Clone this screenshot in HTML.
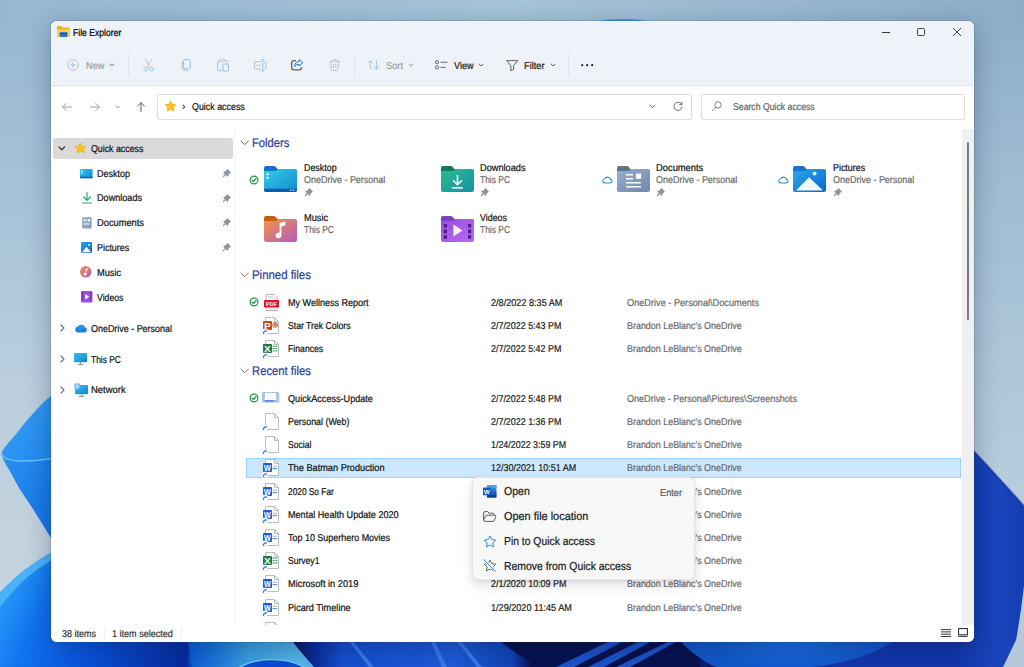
<!DOCTYPE html>
<html lang="en"><head><meta charset="utf-8"><title>File Explorer</title>
<style>
*{box-sizing:border-box;margin:0;padding:0}
html,body{width:1024px;height:667px;overflow:hidden;background:#a3bfd5}
body{position:relative;font-family:"Liberation Sans",sans-serif;text-rendering:geometricPrecision}
.t{position:absolute;white-space:nowrap;display:block;transform-origin:0 50%;-webkit-text-stroke:0.22px currentColor}
.abs{position:absolute}
#bg{position:absolute;left:0;top:0;width:1024px;height:667px}
#win{position:absolute;left:51px;top:21px;width:923px;height:621px;border-radius:6px;background:#fff;overflow:hidden;box-shadow:0 0 0 1px rgba(50,70,95,.16),0 7px 26px rgba(0,15,45,.30)}
#chrome{position:absolute;left:0;top:0;width:923px;height:65px;background:#eef3f9;border-bottom:1px solid #e1e6ec}
#side-sep{position:absolute;left:183px;top:106px;width:1px;height:498px;background:#f3f3f3}
#qa-hl{position:absolute;left:2px;top:117px;width:180px;height:21px;background:#d9d9d9;border-radius:2px}
.box{position:absolute;border:1px solid #dcdcdc;background:#fff;border-radius:2px}
#scroll{position:absolute;left:911px;top:107.5px;width:12.5px;height:496px;background:#f0f0f0}
#thumb{position:absolute;left:5.3px;top:13.2px;width:2px;height:178px;background:#7c7c7c;border-radius:1px}
#sel{position:absolute;left:195px;top:437px;width:715px;height:20px;background:#cce8ff;border:1px solid #99d1ff}
#menu{position:absolute;left:472px;top:477px;width:223px;height:103px;background:#f8f8f8;border-radius:6px;border:1px solid #e6e6e6;box-shadow:0 5px 12px rgba(0,0,0,.13),0 1px 3px rgba(0,0,0,.06)}
.vsep{position:absolute;width:1px;background:#dfe4ea}
svg{position:absolute;overflow:visible}
</style></head>
<body>

<svg id="bg" width="1024" height="667" viewBox="0 0 1024 667">
<defs>
<linearGradient id="sky" x1="0" y1="0" x2="1" y2="0">
<stop offset="0" stop-color="#95b7d1"/><stop offset="0.5" stop-color="#a5c3d9"/><stop offset="0.85" stop-color="#94b4cd"/><stop offset="1" stop-color="#8badc8"/>
</linearGradient>
<linearGradient id="lsky" x1="0" y1="0" x2="0" y2="1">
<stop offset="0" stop-color="#95b7d1"/><stop offset="0.3" stop-color="#a6c2d8"/><stop offset="0.6" stop-color="#bccfde"/><stop offset="1" stop-color="#c8d5e0"/>
</linearGradient>
<linearGradient id="rsky" x1="0" y1="0" x2="0" y2="1">
<stop offset="0" stop-color="#8badc8"/><stop offset="0.3" stop-color="#a0bdd4"/><stop offset="0.7" stop-color="#b6cbdc"/><stop offset="1" stop-color="#bccfdf"/>
</linearGradient>
<linearGradient id="p1a" x1="0" y1="0" x2="1" y2="1">
<stop offset="0" stop-color="#3aa2f6"/><stop offset="1" stop-color="#1f86ee"/>
</linearGradient>
<linearGradient id="p1b" x1="0" y1="0" x2="1" y2="1">
<stop offset="0" stop-color="#2a92f2"/><stop offset="1" stop-color="#0f6ce4"/>
</linearGradient>
<linearGradient id="p2" gradientUnits="userSpaceOnUse" x1="0" y1="590" x2="185" y2="667">
<stop offset="0" stop-color="#2b9cf8"/><stop offset="0.22" stop-color="#1074f0"/><stop offset="0.5" stop-color="#0a56e0"/><stop offset="1" stop-color="#072a9e"/>
</linearGradient>
<linearGradient id="bot" x1="0" y1="0" x2="1" y2="0">
<stop offset="0" stop-color="#1e84f2"/><stop offset="0.05" stop-color="#1468e6"/><stop offset="0.175" stop-color="#0838b4"/>
<stop offset="0.19" stop-color="#0838b4"/><stop offset="0.3" stop-color="#1650d0"/>
<stop offset="0.335" stop-color="#1752d2"/><stop offset="0.42" stop-color="#1c5cda"/><stop offset="0.48" stop-color="#1244b8"/>
<stop offset="0.5" stop-color="#06124e"/><stop offset="0.55" stop-color="#081a60"/><stop offset="0.6" stop-color="#1a50c8"/><stop offset="0.64" stop-color="#0a2478"/>
<stop offset="0.67" stop-color="#0a1f70"/><stop offset="0.7" stop-color="#0f4cc0"/><stop offset="0.78" stop-color="#1a68e0"/><stop offset="0.86" stop-color="#0e4cc0"/><stop offset="0.97" stop-color="#0c3cac"/><stop offset="1" stop-color="#0c3cac"/>
</linearGradient>
<linearGradient id="blob" x1="0" y1="0" x2="1" y2="0">
<stop offset="0" stop-color="#133aae"/><stop offset="0.6" stop-color="#1a45be"/><stop offset="1" stop-color="#153cb0"/>
</linearGradient>
<radialGradient id="glow"><stop offset="0" stop-color="#1f72e8" stop-opacity="0.9"/><stop offset="1" stop-color="#1f72e8" stop-opacity="0"/></radialGradient>
<linearGradient id="lp" gradientUnits="userSpaceOnUse" x1="188" y1="0" x2="300" y2="0"><stop offset="0" stop-color="#0f5cd6"/><stop offset="0.25" stop-color="#1c78dc"/><stop offset="0.55" stop-color="#3aa0e2"/><stop offset="1" stop-color="#56b6ea"/></linearGradient>
<linearGradient id="navy2" gradientUnits="userSpaceOnUse" x1="286" y1="0" x2="343" y2="0"><stop offset="0" stop-color="#050e44"/><stop offset="0.5" stop-color="#0a2e9c"/><stop offset="1" stop-color="#1650d0"/></linearGradient>
</defs>
<rect width="1024" height="667" fill="url(#sky)"/>
<rect x="0" y="0" width="60" height="667" fill="url(#lsky)"/>
<rect x="964" y="0" width="60" height="667" fill="url(#rsky)"/>
<rect x="0" y="0" width="1024" height="24" fill="url(#sky)"/>
<ellipse cx="622" cy="23" rx="27" ry="4" fill="#3a98ee"/>
<!-- left petal 1 -->
<path d="M60 389 C44 399 27 420.5 20 429 C12 439 4 447 1.4 453 C3 458 8 460 14 460.5 C28 462 42 460.5 60 457 Z" fill="url(#p1a)"/>
<path d="M1.4 453 C3 458 8 460 14 460.5 C28 462 42 460.5 60 457 L60 552 C52 540 42 523 33 509 C27 499 21 492 16.2 482.7 C10 470 3 462 1.4 453 Z" fill="url(#p1b)"/>
<path d="M1.4 453 C3 458 8 460 14 460.5 C28 462 42 460.5 60 457" fill="none" stroke="#66c0fc" stroke-width="1.3"/>
<!-- bottom strip -->
<rect x="40" y="630" width="984" height="37" fill="url(#bot)"/>
<rect x="283" y="630" width="60" height="37" fill="url(#navy2)"/>
<path d="M188 630 L284 630 C294 644 304 656 314 667 L192 667 C190 657 189 647 188 630 Z" fill="url(#lp)"/>
<ellipse cx="272" cy="681" rx="42" ry="21.5" fill="#0a4cd2" stroke="#6ac6f4" stroke-width="1.6"/>
<path d="M348 640 L352 640 L374 667 L369 667 Z M430 640 L434 640 L447 667 L442 667 Z M456 640 L460 640 L482 667 L477 667 Z" fill="#3f86ec" opacity="0.8"/>
<path d="M494 636 C510 650 526 660 542 667 L700 667 L700 636 Z" fill="#06124e"/>
<path d="M556 667 L612 640 L626 640 L574 667 Z M588 667 L642 640 L654 640 L604 667 Z M616 667 L668 642 L676 642 L630 667 Z" fill="#1c54cc"/>
<path d="M676 636 L700 636 L700 667 L716 667 C700 660 686 648 676 636 Z" fill="#0a1f70"/>
<path d="M700 636 L676 636 C686 648 700 660 716 667 L1024 667 L1024 636 Z" fill="#1259cc"/>
<ellipse cx="790" cy="640" rx="90" ry="30" fill="url(#glow)"/>
<path d="M812 667 C840 664 876 656 900 636 L1024 636 L1024 667 Z" fill="#1237ac"/>
<!-- left petal 2 -->
<path d="M60 548 C46 554 26 568 17 576 C10 582 4 588 0 592 L0 667 L60 667 Z" fill="#4ab2f8"/>
<path d="M60 556 C46 562 28 576 20 584 C12 592 5 600 0 607 L0 667 L188 667 L188 630 L60 630 Z" fill="url(#p2)"/>
<!-- right blob -->
<path d="M960 437 Q988 466 1026 509 L1026 575 C1023 600 1020 622 1016 640 L1003 667 L960 667 Z" fill="url(#blob)"/>
<path d="M960 437 Q988 466 1026 509" fill="none" stroke="#10309c" stroke-width="2.5" opacity="0.7"/>
<path d="M1026 568 L1026 667 L1003 667 L1016 640 C1020 620 1023 595 1026 568 Z" fill="#b4c8da"/>
<!-- left petal 1 convex top -->
</svg>

<div id="c">
<div id="win">
<div id="chrome"></div>
<div id="side-sep"></div>
<div id="qa-hl"></div>
<div id="scroll">
<div id="thumb"></div></div>
<div id="sel"></div>
<div class="abs" style="left:0;top:604px;width:923px;height:17px;background:#fff"></div></div>
<svg style="left:57.0px;top:26.0px" width="13" height="11" viewBox="0 0 13 11"><path d="M0 1.2 Q0 0 1.2 0 H4.4 L6 1.6 H11.8 Q13 1.6 13 2.8 V11 H0 Z" fill="#f5b21a"/><path d="M0 3.4 H13 V9.8 Q13 11 11.8 11 H1.2 Q0 11 0 9.8 Z" fill="#fdd252"/><rect x="2.6" y="6.6" width="7.8" height="4.4" rx="0.8" fill="#1a78d6"/><rect x="2.6" y="6.6" width="7.8" height="1.6" rx="0.6" fill="#0f5db0"/></svg>
<span class="t" id="t0" style="left:73.2px;top:27.0px;font-size:10.00px;line-height:13.00px;color:#000;transform:scaleX(0.8603);">File Explorer</span><svg style="left:882.0px;top:31.5px" width="8" height="1" viewBox="0 0 8 1"><rect width="8" height="1" fill="#3a3a3a"/></svg>
<svg style="left:917.0px;top:28.0px" width="8" height="8" viewBox="0 0 8 8"><rect x="0.5" y="0.5" width="7" height="7" rx="0.8" fill="none" stroke="#3a3a3a" stroke-width="0.95"/></svg>
<svg style="left:952.5px;top:28.0px" width="8" height="8" viewBox="0 0 8 8"><path d="M0.3 0.3 L7.7 7.7 M7.7 0.3 L0.3 7.7" stroke="#3a3a3a" stroke-width="0.95" stroke-linecap="round"/></svg>
<svg style="left:67.0px;top:59.0px" width="12" height="12" viewBox="0 0 12 12"><circle cx="6" cy="6" r="5.3" fill="none" stroke="#b9bdc2" stroke-width="0.9"/><path d="M6 3.2 V8.8 M3.2 6 H8.8" stroke="#8ec2ee" stroke-width="0.9"/></svg>
<span class="t" id="t1" style="left:86.3px;top:59.9px;font-size:10.00px;line-height:13.00px;color:#9b9fa4;transform:scaleX(0.9193);">New</span><svg style="left:109.0px;top:63.2px" width="6" height="4" viewBox="0 0 6 4"><path d="M1 1 L3 3 L5 1" fill="none" stroke="#8c9095" stroke-width="1" stroke-linecap="round" stroke-linejoin="round"/></svg>
<div class="vsep" style="left:128px;top:53px;height:24px"></div>
<svg style="left:143.0px;top:59.0px" width="11" height="12.5" viewBox="0 0 11 12.5"><path d="M2.2 0.3 L7.6 9 M8.8 0.3 L3.4 9" stroke="#b9bdc2" stroke-width="0.9" fill="none"/><circle cx="2.6" cy="10.2" r="1.8" fill="none" stroke="#8ec2ee" stroke-width="0.9"/><circle cx="8.4" cy="10.2" r="1.8" fill="none" stroke="#8ec2ee" stroke-width="0.9"/></svg>
<svg style="left:181.0px;top:59.0px" width="10" height="12" viewBox="0 0 10 12"><path d="M1.2 2.5 V9.4 Q1.2 11.2 3 11.2 H6.8" fill="none" stroke="#b9bdc2" stroke-width="1"/><rect x="2.6" y="0.5" width="6.6" height="9.3" rx="1.5" fill="none" stroke="#8ec2ee" stroke-width="1"/></svg>
<svg style="left:216.5px;top:58.8px" width="12" height="12.5" viewBox="0 0 12 12.5"><path d="M5 11.6 H2 Q0.6 11.6 0.6 10.2 V3 Q0.6 1.6 2 1.6 H9 Q10.4 1.6 10.4 3 V4" fill="none" stroke="#b9bdc2" stroke-width="1"/><rect x="3.2" y="0.4" width="4.6" height="2.2" rx="0.8" fill="#eef3f9" stroke="#b9bdc2" stroke-width="0.8"/><rect x="6" y="5" width="5.4" height="7" rx="1" fill="none" stroke="#8ec2ee" stroke-width="1"/></svg>
<svg style="left:253.5px;top:59.0px" width="12.5" height="12.5" viewBox="0 0 12.5 12.5"><path d="M7.4 2.6 H2 Q0.5 2.6 0.5 4.1 V8.6 Q0.5 10.1 2 10.1 H7.4 M10.2 2.6 H10.6 Q12 2.6 12 4.1 V8.6 Q12 10.1 10.6 10.1 H10.2" fill="none" stroke="#b9bdc2" stroke-width="1"/><path d="M8.8 0.8 V11.9 M7.4 0.6 H10.2 M7.4 12 H10.2 M2.6 6.3 H6.6" stroke="#8ec2ee" stroke-width="0.9" fill="none"/></svg>
<svg style="left:291.0px;top:59.2px" width="12.5" height="11.6" viewBox="0 0 12.5 11.6"><path d="M5 1.6 H3 Q0.7 1.6 0.7 3.9 V8.6 Q0.7 10.9 3 10.9 H8.2 Q10.5 10.9 10.5 8.6 V8.2" fill="none" stroke="#5d5d5d" stroke-width="1.3"/><path d="M8 0.6 L11.8 3.8 L8 7 V5.2 Q5.2 5 3.8 7.6 Q3.8 3 8 2.4 Z" fill="none" stroke="#1975d2" stroke-width="1" stroke-linejoin="round"/></svg>
<svg style="left:328.5px;top:59.0px" width="11.5" height="12" viewBox="0 0 11.5 12"><path d="M0.4 2.4 H11.1 M4 2.2 Q4 0.5 5.75 0.5 Q7.5 0.5 7.5 2.2 M1.6 2.6 L2.4 10.4 Q2.5 11.5 3.6 11.5 H7.9 Q9 11.5 9.1 10.4 L9.9 2.6 M4.6 4.8 V9 M6.9 4.8 V9" fill="none" stroke="#b9bdc2" stroke-width="0.9"/></svg>
<div class="vsep" style="left:354px;top:53px;height:24px"></div>
<svg style="left:367.0px;top:60.0px" width="13" height="10" viewBox="0 0 13 10"><path d="M3.4 9.6 V0.8 M0.6 3.6 L3.4 0.7 L6.2 3.6" fill="none" stroke="#b9bdc2" stroke-width="0.9"/><path d="M9.4 0.4 V9.2 M6.6 6.4 L9.4 9.3 L12.2 6.4" fill="none" stroke="#8ec2ee" stroke-width="0.9"/></svg>
<span class="t" id="t2" style="left:386.0px;top:59.9px;font-size:10.00px;line-height:13.00px;color:#9b9fa4;transform:scaleX(0.9267);">Sort</span><svg style="left:407.6px;top:63.2px" width="6" height="4" viewBox="0 0 6 4"><path d="M1 1 L3 3 L5 1" fill="none" stroke="#8c9095" stroke-width="1" stroke-linecap="round" stroke-linejoin="round"/></svg>
<svg style="left:435.0px;top:60.2px" width="13" height="9.6" viewBox="0 0 13 9.6"><circle cx="2" cy="2.2" r="1.6" fill="none" stroke="#5a5a5a" stroke-width="0.9"/><circle cx="2" cy="7.4" r="1.6" fill="none" stroke="#5a5a5a" stroke-width="0.9"/><path d="M5.6 2.2 H12.6 M5.6 7.4 H10.4" stroke="#5a5a5a" stroke-width="0.9"/></svg>
<span class="t" id="t3" style="left:454.0px;top:59.9px;font-size:10.00px;line-height:13.00px;color:#1a1a1a;transform:scaleX(0.9116);">View</span><svg style="left:478.4px;top:63.2px" width="6" height="4" viewBox="0 0 6 4"><path d="M1 1 L3 3 L5 1" fill="none" stroke="#6a6a6a" stroke-width="1" stroke-linecap="round" stroke-linejoin="round"/></svg>
<svg style="left:505.8px;top:59.6px" width="12.4" height="11.4" viewBox="0 0 12.4 11.4"><path d="M0.6 0.6 H11.8 L7.6 5.6 V9.4 L4.8 10.8 V5.6 Z" fill="none" stroke="#5a5a5a" stroke-width="0.95" stroke-linejoin="round"/></svg>
<span class="t" id="t4" style="left:524.4px;top:59.9px;font-size:10.00px;line-height:13.00px;color:#1a1a1a;transform:scaleX(0.9220);">Filter</span><svg style="left:549.7px;top:63.2px" width="6" height="4" viewBox="0 0 6 4"><path d="M1 1 L3 3 L5 1" fill="none" stroke="#6a6a6a" stroke-width="1" stroke-linecap="round" stroke-linejoin="round"/></svg>
<div class="vsep" style="left:568px;top:53px;height:24px"></div>
<svg style="left:581.0px;top:64.2px" width="12.4" height="2.4" viewBox="0 0 12.4 2.4"><circle cx="1.2" cy="1.2" r="1.1" fill="#222"/><circle cx="6.2" cy="1.2" r="1.1" fill="#222"/><circle cx="11.2" cy="1.2" r="1.1" fill="#222"/></svg>
<svg style="left:62.0px;top:102.8px" width="10" height="8" viewBox="0 0 10 8"><path d="M9.6 4 H0.8 M4.2 0.5 L0.7 4 L4.2 7.5" fill="none" stroke="#9a9a9a" stroke-width="0.95" stroke-linecap="round" stroke-linejoin="round"/></svg>
<svg style="left:89.5px;top:102.8px" width="10" height="8" viewBox="0 0 10 8"><path d="M0.4 4 H9.2 M5.8 0.5 L9.3 4 L5.8 7.5" fill="none" stroke="#9a9a9a" stroke-width="0.95" stroke-linecap="round" stroke-linejoin="round"/></svg>
<svg style="left:115.2px;top:104.7px" width="5.6" height="3.8" viewBox="0 0 5.6 3.8"><path d="M1 1 L2.8 2.8 L4.6 1" fill="none" stroke="#9a9a9a" stroke-width="1" stroke-linecap="round" stroke-linejoin="round"/></svg>
<svg style="left:136.5px;top:101.6px" width="8" height="10" viewBox="0 0 8 10"><path d="M4 9.6 V0.8 M0.5 4.2 L4 0.7 L7.5 4.2" fill="none" stroke="#555" stroke-width="0.95" stroke-linecap="round" stroke-linejoin="round"/></svg>
<div class="box" style="left:157px;top:93.5px;width:535px;height:26px"></div>
<svg style="left:163.7px;top:100.2px" width="13" height="13" viewBox="0 0 13 13"><polygon points="6.50,1.00 8.12,4.28 11.73,4.80 9.12,7.35 9.73,10.95 6.50,9.25 3.27,10.95 3.88,7.35 1.27,4.80 4.88,4.28" fill="#fcc51c" stroke="#f7ae0c" stroke-width="0.9" stroke-linejoin="round"/></svg>
<svg style="left:181.6px;top:104.4px" width="3.8" height="5.6" viewBox="0 0 3.8 5.6"><path d="M1 1 L2.8 2.8 L1 4.6" fill="none" stroke="#555" stroke-width="1.1" stroke-linecap="round" stroke-linejoin="round"/></svg>
<span class="t" id="t5" style="left:192.4px;top:100.9px;font-size:10.00px;line-height:13.00px;color:#111;transform:scaleX(0.8879);">Quick access</span><svg style="left:648.8px;top:104.0px" width="7" height="4.5" viewBox="0 0 7 4.5"><path d="M1 1 L3.5 3.5 L6 1" fill="none" stroke="#666" stroke-width="0.95" stroke-linecap="round" stroke-linejoin="round"/></svg>
<svg style="left:672.5px;top:101.0px" width="10" height="10" viewBox="0 0 10 10"><path d="M8.7 3.6 A4.1 4.1 0 1 0 9.1 5.6" fill="none" stroke="#666" stroke-width="0.95"/><path d="M8.9 0.9 V3.7 H6.1" fill="none" stroke="#666" stroke-width="0.95"/></svg>
<div class="box" style="left:700.5px;top:93.5px;width:264.5px;height:26px"></div>
<svg style="left:712.0px;top:101.2px" width="10" height="10" viewBox="0 0 10 10"><circle cx="6" cy="3.9" r="3.2" fill="none" stroke="#777" stroke-width="0.9"/><path d="M3.8 6.3 L0.5 9.6" stroke="#777" stroke-width="0.9" stroke-linecap="round"/></svg>
<span class="t" id="t6" style="left:732.6px;top:100.9px;font-size:10.00px;line-height:13.00px;color:#666;transform:scaleX(0.8697);">Search Quick access</span><svg style="left:58.2px;top:145.9px" width="7.6" height="4.8" viewBox="0 0 7.6 4.8"><path d="M1 1 L3.8 3.8 L6.6 1" fill="none" stroke="#333" stroke-width="1.2" stroke-linecap="round" stroke-linejoin="round"/></svg>
<svg style="left:73.9px;top:142.2px" width="13" height="13" viewBox="0 0 13 13"><polygon points="6.50,1.00 8.12,4.28 11.73,4.80 9.12,7.35 9.73,10.95 6.50,9.25 3.27,10.95 3.88,7.35 1.27,4.80 4.88,4.28" fill="#fcc51c" stroke="#f7ae0c" stroke-width="0.9" stroke-linejoin="round"/></svg>
<span class="t" id="t7" style="left:90.6px;top:142.9px;font-size:10.00px;line-height:13.00px;color:#111;transform:scaleX(0.8811);">Quick access</span><span class="t" id="t8" style="left:96.8px;top:168.1px;font-size:10.00px;line-height:13.00px;color:#111;transform:scaleX(0.8968);">Desktop</span><span class="t" id="t9" style="left:96.8px;top:192.2px;font-size:10.00px;line-height:13.00px;color:#111;transform:scaleX(0.9094);">Downloads</span><span class="t" id="t10" style="left:96.8px;top:217.3px;font-size:10.00px;line-height:13.00px;color:#111;transform:scaleX(0.9293);">Documents</span><span class="t" id="t11" style="left:96.8px;top:242.1px;font-size:10.00px;line-height:13.00px;color:#111;transform:scaleX(0.8913);">Pictures</span><span class="t" id="t12" style="left:96.8px;top:266.9px;font-size:10.00px;line-height:13.00px;color:#111;transform:scaleX(0.9263);">Music</span><span class="t" id="t13" style="left:96.8px;top:291.7px;font-size:10.00px;line-height:13.00px;color:#111;transform:scaleX(0.8682);">Videos</span><svg style="left:221.9px;top:169.1px" width="8.5" height="8.5" viewBox="0 0 8.5 8.5"><g transform="translate(4.1,4.9) rotate(45)"><path d="M-2.3 -4.2 H2.3 L2 -1.0 L2.8 0 V1 H-2.8 V0 L-2 -1.0 Z" fill="#8a959f" stroke="#8a959f" stroke-width="0.5" stroke-linejoin="round"/><path d="M0 1 V3.9" stroke="#8a959f" stroke-width="1.3" stroke-linecap="round"/></g></svg>
<svg style="left:221.9px;top:193.7px" width="8.5" height="8.5" viewBox="0 0 8.5 8.5"><g transform="translate(4.1,4.9) rotate(45)"><path d="M-2.3 -4.2 H2.3 L2 -1.0 L2.8 0 V1 H-2.8 V0 L-2 -1.0 Z" fill="#8a959f" stroke="#8a959f" stroke-width="0.5" stroke-linejoin="round"/><path d="M0 1 V3.9" stroke="#8a959f" stroke-width="1.3" stroke-linecap="round"/></g></svg>
<svg style="left:221.9px;top:218.3px" width="8.5" height="8.5" viewBox="0 0 8.5 8.5"><g transform="translate(4.1,4.9) rotate(45)"><path d="M-2.3 -4.2 H2.3 L2 -1.0 L2.8 0 V1 H-2.8 V0 L-2 -1.0 Z" fill="#8a959f" stroke="#8a959f" stroke-width="0.5" stroke-linejoin="round"/><path d="M0 1 V3.9" stroke="#8a959f" stroke-width="1.3" stroke-linecap="round"/></g></svg>
<svg style="left:221.9px;top:243.1px" width="8.5" height="8.5" viewBox="0 0 8.5 8.5"><g transform="translate(4.1,4.9) rotate(45)"><path d="M-2.3 -4.2 H2.3 L2 -1.0 L2.8 0 V1 H-2.8 V0 L-2 -1.0 Z" fill="#8a959f" stroke="#8a959f" stroke-width="0.5" stroke-linejoin="round"/><path d="M0 1 V3.9" stroke="#8a959f" stroke-width="1.3" stroke-linecap="round"/></g></svg>
<svg style="left:80.2px;top:168.6px" width="12.6" height="9.2" viewBox="0 0 12.6 9.2"><defs><linearGradient id="sd" x1="0" y1="0" x2="1" y2="1"><stop offset="0" stop-color="#34c6ea"/><stop offset="1" stop-color="#1486d0"/></linearGradient></defs><rect width="12.6" height="9.2" rx="1" fill="url(#sd)"/><rect y="7.8" width="12.6" height="1.4" fill="#0c5cb4"/><rect x="1.2" y="1.6" width="1.3" height="1.3" fill="#fff"/><rect x="1.2" y="3.8" width="1.3" height="1.3" fill="#fff"/></svg>
<svg style="left:81.5px;top:192.0px" width="10" height="12" viewBox="0 0 10 12"><path d="M5 0.5 V8.2 M1.6 5 L5 8.4 L8.4 5" fill="none" stroke="#22a878" stroke-width="1.2" stroke-linecap="round" stroke-linejoin="round"/><path d="M0.6 11 H9.4" stroke="#22a878" stroke-width="1.2" stroke-linecap="round"/></svg>
<svg style="left:81.6px;top:217.0px" width="9.6" height="11.6" viewBox="0 0 9.6 11.6"><defs><linearGradient id="sdoc" x1="0" y1="0" x2="1" y2="1"><stop offset="0" stop-color="#a9bcd8"/><stop offset="1" stop-color="#7f96b8"/></linearGradient></defs><rect width="9.6" height="11.6" rx="1" fill="url(#sdoc)"/><path d="M1.8 3.4 H4.6 M1.8 7 H7.8" stroke="#fff" stroke-width="1.1"/><rect x="5.8" y="2.2" width="2.2" height="2.2" fill="#fff"/></svg>
<svg style="left:80.8px;top:242.0px" width="11" height="11" viewBox="0 0 11 11"><defs><linearGradient id="spic" x1="0" y1="0" x2="1" y2="1"><stop offset="0" stop-color="#2ba0ea"/><stop offset="1" stop-color="#0c66c8"/></linearGradient></defs><rect width="11" height="11" rx="1.2" fill="url(#spic)"/><path d="M1 10.2 L5.6 4.8 L10 10.2 Z" fill="#fff"/><circle cx="8.2" cy="2.8" r="1.1" fill="#fff"/></svg>
<svg style="left:80.4px;top:266.4px" width="11.6" height="11.6" viewBox="0 0 11.6 11.6"><defs><linearGradient id="smus" x1="0" y1="0" x2="1" y2="1"><stop offset="0" stop-color="#f09050"/><stop offset="1" stop-color="#b860b4"/></linearGradient></defs><circle cx="5.8" cy="5.8" r="5.8" fill="url(#smus)"/><path d="M5.6 8 V3 L8 2.4 V4 L6.4 4.4 V8 A1.3 1.3 0 1 1 5.6 7 Z" fill="#fff"/></svg>
<svg style="left:80.6px;top:291.4px" width="11.4" height="11.4" viewBox="0 0 11.4 11.4"><rect width="11.4" height="11.4" rx="1.2" fill="#9a4ee0"/><path d="M4.2 3 L8.2 5.7 L4.2 8.4 Z" fill="#fff"/><path d="M1.4 1.4 V10 M10 1.4 V10" stroke="#4a2090" stroke-width="1.2" stroke-dasharray="1.6 1.2"/></svg>
<svg style="left:59.9px;top:324.0px" width="5" height="8" viewBox="0 0 5 8"><path d="M1 1 L4 4 L1 7" fill="none" stroke="#6a6a6a" stroke-width="1.1" stroke-linecap="round" stroke-linejoin="round"/></svg>
<span class="t" id="t14" style="left:90.5px;top:322.7px;font-size:10.00px;line-height:13.00px;color:#111;transform:scaleX(0.8930);">OneDrive - Personal</span><svg style="left:59.9px;top:354.8px" width="5" height="8" viewBox="0 0 5 8"><path d="M1 1 L4 4 L1 7" fill="none" stroke="#6a6a6a" stroke-width="1.1" stroke-linecap="round" stroke-linejoin="round"/></svg>
<span class="t" id="t15" style="left:90.5px;top:353.5px;font-size:10.00px;line-height:13.00px;color:#111;transform:scaleX(0.8408);">This PC</span><svg style="left:59.9px;top:385.7px" width="5" height="8" viewBox="0 0 5 8"><path d="M1 1 L4 4 L1 7" fill="none" stroke="#6a6a6a" stroke-width="1.1" stroke-linecap="round" stroke-linejoin="round"/></svg>
<span class="t" id="t16" style="left:90.5px;top:384.4px;font-size:10.00px;line-height:13.00px;color:#111;transform:scaleX(0.9458);">Network</span><svg style="left:73.8px;top:323.6px" width="13.2" height="8.4" viewBox="0 0 13.2 8.4"><path d="M3.2 8.4 H10.6 A2.6 2.6 0 0 0 11 3.3 A3.9 3.9 0 0 0 4 2.6 A3 3 0 0 0 3.2 8.4 Z" fill="#1a7ee0"/><path d="M4 2.6 A3.9 3.9 0 0 1 11 3.3 L5 7 Z" fill="#2f9bf2" opacity="0.7"/></svg>
<svg style="left:74.0px;top:353.0px" width="13" height="12" viewBox="0 0 13 12"><defs><linearGradient id="mon353" x1="0" y1="0" x2="1" y2="1"><stop offset="0" stop-color="#34c4e6"/><stop offset="1" stop-color="#1482cc"/></linearGradient></defs><rect x="0" y="0" width="13" height="9.2" rx="1" fill="url(#mon353)"/><path d="M6.5 9.2 V11 M3.6 11.4 H9.4" stroke="#8a9098" stroke-width="1"/></svg>
<svg style="left:75.2px;top:385.2px" width="13" height="12" viewBox="0 0 13 12"><defs><linearGradient id="mon385" x1="0" y1="0" x2="1" y2="1"><stop offset="0" stop-color="#34c4e6"/><stop offset="1" stop-color="#1482cc"/></linearGradient></defs><rect x="0" y="0" width="13" height="9.2" rx="1" fill="url(#mon385)"/><path d="M6.5 9.2 V11 M3.6 11.4 H9.4" stroke="#8a9098" stroke-width="1"/></svg>
<svg style="left:73.8px;top:383.4px" width="6.4" height="6.4" viewBox="0 0 6.4 6.4"><circle cx="3.2" cy="3.2" r="3.1" fill="#5ab4ee"/><path d="M0.4 3.2 H6 M3.2 0.3 Q1.4 3.2 3.2 6.1 M3.2 0.3 Q5 3.2 3.2 6.1" stroke="#e8f4ff" stroke-width="0.6" fill="none"/></svg>
<svg style="left:240.2px;top:140.1px" width="9.4" height="5.7" viewBox="0 0 9.4 5.7"><path d="M1 1 L4.7 4.7 L8.4 1" fill="none" stroke="#707070" stroke-width="1" stroke-linecap="round" stroke-linejoin="round"/></svg>
<span class="t" id="t17" style="left:251.9px;top:134.8px;font-size:12.50px;line-height:16.25px;color:#2a4198;transform:scaleX(0.8972);">Folders</span><svg style="left:240.2px;top:272.2px" width="9.4" height="5.7" viewBox="0 0 9.4 5.7"><path d="M1 1 L4.7 4.7 L8.4 1" fill="none" stroke="#707070" stroke-width="1" stroke-linecap="round" stroke-linejoin="round"/></svg>
<span class="t" id="t18" style="left:251.9px;top:267.0px;font-size:12.50px;line-height:16.25px;color:#2a4198;transform:scaleX(0.9114);">Pinned files</span><svg style="left:240.2px;top:368.2px" width="9.4" height="5.7" viewBox="0 0 9.4 5.7"><path d="M1 1 L4.7 4.7 L8.4 1" fill="none" stroke="#707070" stroke-width="1" stroke-linecap="round" stroke-linejoin="round"/></svg>
<span class="t" id="t19" style="left:251.9px;top:363.0px;font-size:12.50px;line-height:16.25px;color:#2a4198;transform:scaleX(0.9018);">Recent files</span><svg style="left:264.2px;top:166.1px" width="33" height="26" viewBox="0 0 33 26"><defs><linearGradient id="fg1" x1="0" y1="0" x2="1" y2="1"><stop offset="0" stop-color="#35cde6"/><stop offset="1" stop-color="#1488d2"/></linearGradient></defs><path d="M0 2 Q0 0 2 0 H9.5 Q11 0 12 1.2 L13.6 3.2 H31 Q33 3.2 33 5.2 V10 H0 Z" fill="#136fd0"/><path d="M0 5 H11 Q12.2 5 13 4.2 L14 3.2 H31 Q33 3.2 33 5.2 V24 Q33 26 31 26 H2 Q0 26 0 24 Z" fill="url(#fg1)"/><path d="M0 22.8 H33 V24 Q33 26 31 26 H2 Q0 26 0 24 Z" fill="#0a5cb6"/><rect x="2.6" y="7.2" width="2" height="2" fill="#fff"/><rect x="2.6" y="10.8" width="2" height="2" fill="#fff"/><rect x="26" y="23.6" width="1.6" height="1.2" fill="#bfe0ff"/><rect x="28.8" y="23.6" width="1.6" height="1.2" fill="#bfe0ff"/></svg>
<svg style="left:440.7px;top:166.1px" width="33" height="26" viewBox="0 0 33 26"><defs><linearGradient id="fg2" x1="0" y1="0" x2="1" y2="1"><stop offset="0" stop-color="#2cba8a"/><stop offset="1" stop-color="#1692a4"/></linearGradient></defs><path d="M0 2 Q0 0 2 0 H9.5 Q11 0 12 1.2 L13.6 3.2 H31 Q33 3.2 33 5.2 V10 H0 Z" fill="#0e7d5a"/><path d="M0 5 H11 Q12.2 5 13 4.2 L14 3.2 H31 Q33 3.2 33 5.2 V24 Q33 26 31 26 H2 Q0 26 0 24 Z" fill="url(#fg2)"/><path d="M16.5 9 V18.4 M12 14.2 L16.5 18.7 L21 14.2" fill="none" stroke="#fff" stroke-width="1.6"/><path d="M11 21.8 H22" stroke="#fff" stroke-width="1.6"/></svg>
<svg style="left:617.0px;top:166.1px" width="33" height="26" viewBox="0 0 33 26"><defs><linearGradient id="fg3" x1="0" y1="0" x2="1" y2="1"><stop offset="0" stop-color="#97aed0"/><stop offset="1" stop-color="#6f88aa"/></linearGradient></defs><path d="M0 2 Q0 0 2 0 H9.5 Q11 0 12 1.2 L13.6 3.2 H31 Q33 3.2 33 5.2 V10 H0 Z" fill="#5f7686"/><path d="M0 5 H11 Q12.2 5 13 4.2 L14 3.2 H31 Q33 3.2 33 5.2 V24 Q33 26 31 26 H2 Q0 26 0 24 Z" fill="url(#fg3)"/><path d="M9 12 H16 M9 16 H16 M9 20 H24 M9 24 H24" stroke="#fff" stroke-width="1.5" transform="translate(0,-3.2)"/><rect x="19" y="7.6" width="5.2" height="5.2" fill="#fff"/></svg>
<svg style="left:793.4px;top:166.1px" width="33" height="26" viewBox="0 0 33 26"><defs><linearGradient id="fg4" x1="0" y1="0" x2="1" y2="1"><stop offset="0" stop-color="#2fa8ec"/><stop offset="1" stop-color="#0966c8"/></linearGradient></defs><path d="M0 2 Q0 0 2 0 H9.5 Q11 0 12 1.2 L13.6 3.2 H31 Q33 3.2 33 5.2 V10 H0 Z" fill="#1374d8"/><path d="M0 5 H11 Q12.2 5 13 4.2 L14 3.2 H31 Q33 3.2 33 5.2 V24 Q33 26 31 26 H2 Q0 26 0 24 Z" fill="url(#fg4)"/><path d="M3 24.6 L16 11.2 L30 24.6 Z" fill="#f0f7ff"/><circle cx="21.6" cy="7.6" r="1.9" fill="#fff"/></svg>
<svg style="left:264.2px;top:215.6px" width="33" height="26" viewBox="0 0 33 26"><defs><linearGradient id="fg5" x1="0" y1="0" x2="1" y2="1"><stop offset="0" stop-color="#f5924a"/><stop offset="1" stop-color="#b45cb8"/></linearGradient></defs><path d="M0 2 Q0 0 2 0 H9.5 Q11 0 12 1.2 L13.6 3.2 H31 Q33 3.2 33 5.2 V10 H0 Z" fill="#c4600e"/><path d="M0 5 H11 Q12.2 5 13 4.2 L14 3.2 H31 Q33 3.2 33 5.2 V24 Q33 26 31 26 H2 Q0 26 0 24 Z" fill="url(#fg5)"/><path d="M15.6 18.6 V7 L21.4 5.4 V9.2 L17.4 10.4 V19.4 A2.9 2.9 0 1 1 15.6 16.8 Z" fill="#fff"/></svg>
<svg style="left:440.7px;top:215.6px" width="33" height="26" viewBox="0 0 33 26"><defs><linearGradient id="fg6" x1="0" y1="0" x2="1" y2="1"><stop offset="0" stop-color="#9a4ce0"/><stop offset="1" stop-color="#b86af0"/></linearGradient></defs><path d="M0 2 Q0 0 2 0 H9.5 Q11 0 12 1.2 L13.6 3.2 H31 Q33 3.2 33 5.2 V10 H0 Z" fill="#7a40c0"/><path d="M0 5 H11 Q12.2 5 13 4.2 L14 3.2 H31 Q33 3.2 33 5.2 V24 Q33 26 31 26 H2 Q0 26 0 24 Z" fill="url(#fg6)"/><path d="M12.4 8.6 L21.6 14.6 L12.4 20.6 Z" fill="#f4ecff"/><path d="M4.4 8 V23 M28.6 8 V23" stroke="#4a2388" stroke-width="3.2" stroke-dasharray="3.6 2"/></svg>
<span class="t" id="t20" style="left:303.5px;top:162.3px;font-size:10.00px;line-height:13.00px;color:#111;transform:scaleX(0.8886);">Desktop</span><span class="t" id="t21" style="left:303.5px;top:174.4px;font-size:10.00px;line-height:13.00px;color:#6b6b6b;transform:scaleX(0.8974);">OneDrive - Personal</span><svg style="left:303.7px;top:188.0px" width="8.5" height="8.5" viewBox="0 0 8.5 8.5"><g transform="translate(4.1,4.9) rotate(45)"><path d="M-2.3 -4.2 H2.3 L2 -1.0 L2.8 0 V1 H-2.8 V0 L-2 -1.0 Z" fill="#8a959f" stroke="#8a959f" stroke-width="0.5" stroke-linejoin="round"/><path d="M0 1 V3.9" stroke="#8a959f" stroke-width="1.3" stroke-linecap="round"/></g></svg>
<span class="t" id="t22" style="left:479.6px;top:162.3px;font-size:10.00px;line-height:13.00px;color:#111;transform:scaleX(0.9215);">Downloads</span><span class="t" id="t23" style="left:479.6px;top:174.4px;font-size:10.00px;line-height:13.00px;color:#6b6b6b;transform:scaleX(0.8436);">This PC</span><svg style="left:479.8px;top:188.0px" width="8.5" height="8.5" viewBox="0 0 8.5 8.5"><g transform="translate(4.1,4.9) rotate(45)"><path d="M-2.3 -4.2 H2.3 L2 -1.0 L2.8 0 V1 H-2.8 V0 L-2 -1.0 Z" fill="#8a959f" stroke="#8a959f" stroke-width="0.5" stroke-linejoin="round"/><path d="M0 1 V3.9" stroke="#8a959f" stroke-width="1.3" stroke-linecap="round"/></g></svg>
<span class="t" id="t24" style="left:656.0px;top:162.3px;font-size:10.00px;line-height:13.00px;color:#111;transform:scaleX(0.9352);">Documents</span><span class="t" id="t25" style="left:656.0px;top:174.4px;font-size:10.00px;line-height:13.00px;color:#6b6b6b;transform:scaleX(0.8974);">OneDrive - Personal</span><svg style="left:656.2px;top:188.0px" width="8.5" height="8.5" viewBox="0 0 8.5 8.5"><g transform="translate(4.1,4.9) rotate(45)"><path d="M-2.3 -4.2 H2.3 L2 -1.0 L2.8 0 V1 H-2.8 V0 L-2 -1.0 Z" fill="#8a959f" stroke="#8a959f" stroke-width="0.5" stroke-linejoin="round"/><path d="M0 1 V3.9" stroke="#8a959f" stroke-width="1.3" stroke-linecap="round"/></g></svg>
<span class="t" id="t26" style="left:832.6px;top:162.3px;font-size:10.00px;line-height:13.00px;color:#111;transform:scaleX(0.8886);">Pictures</span><span class="t" id="t27" style="left:832.6px;top:174.4px;font-size:10.00px;line-height:13.00px;color:#6b6b6b;transform:scaleX(0.8974);">OneDrive - Personal</span><svg style="left:832.8px;top:188.0px" width="8.5" height="8.5" viewBox="0 0 8.5 8.5"><g transform="translate(4.1,4.9) rotate(45)"><path d="M-2.3 -4.2 H2.3 L2 -1.0 L2.8 0 V1 H-2.8 V0 L-2 -1.0 Z" fill="#8a959f" stroke="#8a959f" stroke-width="0.5" stroke-linejoin="round"/><path d="M0 1 V3.9" stroke="#8a959f" stroke-width="1.3" stroke-linecap="round"/></g></svg>
<span class="t" id="t28" style="left:303.5px;top:211.7px;font-size:10.00px;line-height:13.00px;color:#111;transform:scaleX(0.9225);">Music</span><span class="t" id="t29" style="left:303.5px;top:223.8px;font-size:10.00px;line-height:13.00px;color:#6b6b6b;transform:scaleX(0.8408);">This PC</span><span class="t" id="t30" style="left:479.6px;top:211.7px;font-size:10.00px;line-height:13.00px;color:#111;transform:scaleX(0.8880);">Videos</span><span class="t" id="t31" style="left:479.6px;top:223.8px;font-size:10.00px;line-height:13.00px;color:#6b6b6b;transform:scaleX(0.8436);">This PC</span><svg style="left:249.0px;top:175.0px" width="10" height="10" viewBox="0 0 10 10"><circle cx="5" cy="5" r="3.9" fill="#fff" stroke="#2c9a4c" stroke-width="1.25"/><path d="M3.1 5.1 L4.5 6.5 L7 3.7" fill="none" stroke="#2c9a4c" stroke-width="1.3" stroke-linecap="round" stroke-linejoin="round"/></svg>
<svg style="left:601.8px;top:175.9px" width="10.4" height="7.8" viewBox="0 0 12 9"><path d="M3.2 8 H9.2 A2.2 2.2 0 0 0 9.4 3.6 A3.2 3.2 0 0 0 3.4 3.2 A2.4 2.4 0 0 0 3.2 8 Z" fill="#fff" stroke="#1e8fe8" stroke-width="1.25" stroke-linejoin="round"/></svg>
<svg style="left:778.4px;top:175.9px" width="10.4" height="7.8" viewBox="0 0 12 9"><path d="M3.2 8 H9.2 A2.2 2.2 0 0 0 9.4 3.6 A3.2 3.2 0 0 0 3.4 3.2 A2.4 2.4 0 0 0 3.2 8 Z" fill="#fff" stroke="#1e8fe8" stroke-width="1.25" stroke-linejoin="round"/></svg>
<svg style="left:263.6px;top:293.7px" width="15" height="17" viewBox="0 0 15 17"><path d="M2 0.5 H10 L13 3.5 V16.5 H2 Z" fill="#fff" stroke="#b5b5b5" stroke-width="1"/><path d="M3.5 2.5 H9 M3.5 4 H11.5 M3.5 14.8 H11.5" stroke="#d0d0d0" stroke-width="0.8"/><rect x="0" y="6" width="15" height="7.6" rx="0.8" fill="#e0142c"/><text x="7.5" y="12" font-family="Liberation Sans, sans-serif" font-size="5.6" font-weight="bold" fill="#fff" text-anchor="middle">PDF</text></svg>
<svg style="left:249.2px;top:297.2px" width="10" height="10" viewBox="0 0 10 10"><circle cx="5" cy="5" r="3.9" fill="#fff" stroke="#2c9a4c" stroke-width="1.25"/><path d="M3.1 5.1 L4.5 6.5 L7 3.7" fill="none" stroke="#2c9a4c" stroke-width="1.3" stroke-linecap="round" stroke-linejoin="round"/></svg>
<span class="t" id="t32" style="left:287.8px;top:296.9px;font-size:10.00px;line-height:13.00px;color:#111;transform:scaleX(0.9026);">My Wellness Report</span><span class="t" id="t33" style="left:491.0px;top:296.9px;font-size:10.00px;line-height:13.00px;color:#222;transform:scaleX(0.9106);">2/8/2022 8:35 AM</span><span class="t" id="t34" style="left:626.8px;top:296.9px;font-size:10.00px;line-height:13.00px;color:#6b6b6b;transform:scaleX(0.9170);">OneDrive - Personal\Documents</span><svg style="left:264.8px;top:316.8px" width="14" height="17" viewBox="0 0 14 17"><path d="M0.5 0.5 H9.5 L13.5 4.5 V16.5 H0.5 Z" fill="#fff" stroke="#b4b4b4" stroke-width="0.9"/><path d="M9.5 0.5 V4.5 H13.5" fill="none" stroke="#b4b4b4" stroke-width="0.9"/><circle cx="10" cy="8" r="3" fill="#e8a080"/><path d="M10 5 V8 H13" stroke="#c84a1c" stroke-width="0.8" fill="none"/><rect x="-2" y="4" width="9" height="9" rx="0.8" fill="#c84a1c"/><text x="2.5" y="11.6" font-family="Liberation Sans, sans-serif" font-size="8.6" font-weight="bold" fill="#fff" text-anchor="middle" textLength="6.8" lengthAdjust="spacingAndGlyphs">P</text></svg>
<svg style="left:262.3px;top:329.4px" width="5.6" height="5.2" viewBox="0 0 5.6 5.2"><rect width="5.6" height="5.2" fill="#fff"/><path d="M0 0 H5.6 V5.2 H0 Z" fill="none" stroke="#d8dde4" stroke-width="0.5"/><path d="M1.4 4.4 Q1.5 2.2 3.6 2.1" fill="none" stroke="#2a86e8" stroke-width="1.2" stroke-linecap="round"/><path d="M2.6 0.9 H4.6 V2.9 Z" fill="#2a86e8"/></svg>
<span class="t" id="t35" style="left:287.8px;top:320.0px;font-size:10.00px;line-height:13.00px;color:#111;transform:scaleX(0.8651);">Star Trek Colors</span><span class="t" id="t36" style="left:491.0px;top:320.0px;font-size:10.00px;line-height:13.00px;color:#222;transform:scaleX(0.8904);">2/7/2022 5:43 PM</span><span class="t" id="t37" style="left:626.8px;top:320.0px;font-size:10.00px;line-height:13.00px;color:#6b6b6b;transform:scaleX(0.8923);">Brandon LeBlanc's OneDrive</span><svg style="left:264.8px;top:340.1px" width="14" height="17" viewBox="0 0 14 17"><path d="M0.5 0.5 H9.5 L13.5 4.5 V16.5 H0.5 Z" fill="#fff" stroke="#b4b4b4" stroke-width="0.9"/><path d="M9.5 0.5 V4.5 H13.5" fill="none" stroke="#b4b4b4" stroke-width="0.9"/><path d="M7.6 6.2 H9.6 M10.4 6.2 H12.4 M7.6 8.5 H9.6 M10.4 8.5 H12.4 M7.6 10.8 H9.6 M10.4 10.8 H12.4" stroke="#3a9a60" stroke-width="1.2"/><rect x="-2" y="4" width="9" height="9" rx="0.8" fill="#1e7a44"/><text x="2.5" y="11.6" font-family="Liberation Sans, sans-serif" font-size="8.6" font-weight="bold" fill="#fff" text-anchor="middle" textLength="6.8" lengthAdjust="spacingAndGlyphs">X</text></svg>
<svg style="left:262.3px;top:352.7px" width="5.6" height="5.2" viewBox="0 0 5.6 5.2"><rect width="5.6" height="5.2" fill="#fff"/><path d="M0 0 H5.6 V5.2 H0 Z" fill="none" stroke="#d8dde4" stroke-width="0.5"/><path d="M1.4 4.4 Q1.5 2.2 3.6 2.1" fill="none" stroke="#2a86e8" stroke-width="1.2" stroke-linecap="round"/><path d="M2.6 0.9 H4.6 V2.9 Z" fill="#2a86e8"/></svg>
<span class="t" id="t38" style="left:287.8px;top:343.3px;font-size:10.00px;line-height:13.00px;color:#111;transform:scaleX(0.8675);">Finances</span><span class="t" id="t39" style="left:491.0px;top:343.3px;font-size:10.00px;line-height:13.00px;color:#222;transform:scaleX(0.8904);">2/7/2022 5:42 PM</span><span class="t" id="t40" style="left:626.8px;top:343.3px;font-size:10.00px;line-height:13.00px;color:#6b6b6b;transform:scaleX(0.8923);">Brandon LeBlanc's OneDrive</span><svg style="left:262.1px;top:392.2px" width="17.6" height="10.8" viewBox="0 0 17.6 10.8"><rect x="0.6" y="0.6" width="17" height="10.2" rx="0.6" fill="#c9ced6" opacity="0.7"/><rect x="0" y="0" width="17" height="10.2" rx="0.6" fill="#a9c5e3"/><path d="M3.2 1 H13.8 L14.4 8 H2.6 Z" fill="#fff"/><path d="M6 1.4 V7.6 M8.4 1.4 V7.6 M10.8 1.4 V7.6" stroke="#e6edf6" stroke-width="0.6"/><rect x="2.8" y="8.4" width="9.4" height="1.1" fill="#3a66d6"/></svg>
<svg style="left:249.2px;top:393.2px" width="10" height="10" viewBox="0 0 10 10"><circle cx="5" cy="5" r="3.9" fill="#fff" stroke="#2c9a4c" stroke-width="1.25"/><path d="M3.1 5.1 L4.5 6.5 L7 3.7" fill="none" stroke="#2c9a4c" stroke-width="1.3" stroke-linecap="round" stroke-linejoin="round"/></svg>
<span class="t" id="t41" style="left:287.8px;top:392.9px;font-size:10.00px;line-height:13.00px;color:#111;transform:scaleX(0.9092);">QuickAccess-Update</span><span class="t" id="t42" style="left:491.0px;top:392.9px;font-size:10.00px;line-height:13.00px;color:#222;transform:scaleX(0.8904);">2/7/2022 5:48 PM</span><span class="t" id="t43" style="left:626.8px;top:392.9px;font-size:10.00px;line-height:13.00px;color:#6b6b6b;transform:scaleX(0.9044);">OneDrive - Personal\Pictures\Screenshots</span><svg style="left:264.8px;top:412.8px" width="14" height="17" viewBox="0 0 14 17"><path d="M0.5 0.5 H9.5 L13.5 4.5 V16.5 H0.5 Z" fill="#fff" stroke="#b4b4b4" stroke-width="0.9"/><path d="M9.5 0.5 V4.5 H13.5" fill="none" stroke="#b4b4b4" stroke-width="0.9"/></svg>
<svg style="left:262.3px;top:425.4px" width="5.6" height="5.2" viewBox="0 0 5.6 5.2"><rect width="5.6" height="5.2" fill="#fff"/><path d="M0 0 H5.6 V5.2 H0 Z" fill="none" stroke="#d8dde4" stroke-width="0.5"/><path d="M1.4 4.4 Q1.5 2.2 3.6 2.1" fill="none" stroke="#2a86e8" stroke-width="1.2" stroke-linecap="round"/><path d="M2.6 0.9 H4.6 V2.9 Z" fill="#2a86e8"/></svg>
<span class="t" id="t44" style="left:287.8px;top:416.0px;font-size:10.00px;line-height:13.00px;color:#111;transform:scaleX(0.8860);">Personal (Web)</span><span class="t" id="t45" style="left:491.0px;top:416.0px;font-size:10.00px;line-height:13.00px;color:#222;transform:scaleX(0.8904);">2/7/2022 1:36 PM</span><span class="t" id="t46" style="left:626.8px;top:416.0px;font-size:10.00px;line-height:13.00px;color:#6b6b6b;transform:scaleX(0.8923);">Brandon LeBlanc's OneDrive</span><svg style="left:264.8px;top:436.1px" width="14" height="17" viewBox="0 0 14 17"><path d="M0.5 0.5 H9.5 L13.5 4.5 V16.5 H0.5 Z" fill="#fff" stroke="#b4b4b4" stroke-width="0.9"/><path d="M9.5 0.5 V4.5 H13.5" fill="none" stroke="#b4b4b4" stroke-width="0.9"/></svg>
<svg style="left:262.3px;top:448.7px" width="5.6" height="5.2" viewBox="0 0 5.6 5.2"><rect width="5.6" height="5.2" fill="#fff"/><path d="M0 0 H5.6 V5.2 H0 Z" fill="none" stroke="#d8dde4" stroke-width="0.5"/><path d="M1.4 4.4 Q1.5 2.2 3.6 2.1" fill="none" stroke="#2a86e8" stroke-width="1.2" stroke-linecap="round"/><path d="M2.6 0.9 H4.6 V2.9 Z" fill="#2a86e8"/></svg>
<span class="t" id="t47" style="left:287.8px;top:439.3px;font-size:10.00px;line-height:13.00px;color:#111;transform:scaleX(0.8587);">Social</span><span class="t" id="t48" style="left:491.0px;top:439.3px;font-size:10.00px;line-height:13.00px;color:#222;transform:scaleX(0.8898);">1/24/2022 3:59 PM</span><span class="t" id="t49" style="left:626.8px;top:439.3px;font-size:10.00px;line-height:13.00px;color:#6b6b6b;transform:scaleX(0.8923);">Brandon LeBlanc's OneDrive</span><svg style="left:264.8px;top:459.2px" width="14" height="17" viewBox="0 0 14 17"><path d="M0.5 0.5 H9.5 L13.5 4.5 V16.5 H0.5 Z" fill="#fff" stroke="#b4b4b4" stroke-width="0.9"/><path d="M9.5 0.5 V4.5 H13.5" fill="none" stroke="#b4b4b4" stroke-width="0.9"/><path d="M7.6 7.2 H12.2" stroke="#a4c8f0" stroke-width="1.2"/><path d="M7.6 9.6 H12.2" stroke="#5a96e0" stroke-width="1.2"/><rect x="-2" y="4" width="9" height="9" rx="0.8" fill="#1f5fc6"/><text x="2.5" y="11.6" font-family="Liberation Sans, sans-serif" font-size="8.6" font-weight="bold" fill="#fff" text-anchor="middle" textLength="6.8" lengthAdjust="spacingAndGlyphs">W</text></svg>
<svg style="left:262.3px;top:471.8px" width="5.6" height="5.2" viewBox="0 0 5.6 5.2"><rect width="5.6" height="5.2" fill="#fff"/><path d="M0 0 H5.6 V5.2 H0 Z" fill="none" stroke="#d8dde4" stroke-width="0.5"/><path d="M1.4 4.4 Q1.5 2.2 3.6 2.1" fill="none" stroke="#2a86e8" stroke-width="1.2" stroke-linecap="round"/><path d="M2.6 0.9 H4.6 V2.9 Z" fill="#2a86e8"/></svg>
<span class="t" id="t50" style="left:287.8px;top:462.4px;font-size:10.00px;line-height:13.00px;color:#111;transform:scaleX(0.9195);">The Batman Production</span><span class="t" id="t51" style="left:491.0px;top:462.4px;font-size:10.00px;line-height:13.00px;color:#222;transform:scaleX(0.8961);">12/30/2021 10:51 AM</span><span class="t" id="t52" style="left:626.8px;top:462.4px;font-size:10.00px;line-height:13.00px;color:#6b6b6b;transform:scaleX(0.8923);">Brandon LeBlanc's OneDrive</span><svg style="left:264.8px;top:482.5px" width="14" height="17" viewBox="0 0 14 17"><path d="M0.5 0.5 H9.5 L13.5 4.5 V16.5 H0.5 Z" fill="#fff" stroke="#b4b4b4" stroke-width="0.9"/><path d="M9.5 0.5 V4.5 H13.5" fill="none" stroke="#b4b4b4" stroke-width="0.9"/><path d="M7.6 7.2 H12.2" stroke="#a4c8f0" stroke-width="1.2"/><path d="M7.6 9.6 H12.2" stroke="#5a96e0" stroke-width="1.2"/><rect x="-2" y="4" width="9" height="9" rx="0.8" fill="#1f5fc6"/><text x="2.5" y="11.6" font-family="Liberation Sans, sans-serif" font-size="8.6" font-weight="bold" fill="#fff" text-anchor="middle" textLength="6.8" lengthAdjust="spacingAndGlyphs">W</text></svg>
<svg style="left:262.3px;top:495.1px" width="5.6" height="5.2" viewBox="0 0 5.6 5.2"><rect width="5.6" height="5.2" fill="#fff"/><path d="M0 0 H5.6 V5.2 H0 Z" fill="none" stroke="#d8dde4" stroke-width="0.5"/><path d="M1.4 4.4 Q1.5 2.2 3.6 2.1" fill="none" stroke="#2a86e8" stroke-width="1.2" stroke-linecap="round"/><path d="M2.6 0.9 H4.6 V2.9 Z" fill="#2a86e8"/></svg>
<span class="t" id="t53" style="left:287.8px;top:485.7px;font-size:10.00px;line-height:13.00px;color:#111;transform:scaleX(0.8320);">2020 So Far</span><span class="t" id="t54" style="left:626.8px;top:485.7px;font-size:10.00px;line-height:13.00px;color:#6b6b6b;transform:scaleX(0.8923);">Brandon LeBlanc's OneDrive</span><svg style="left:264.8px;top:505.6px" width="14" height="17" viewBox="0 0 14 17"><path d="M0.5 0.5 H9.5 L13.5 4.5 V16.5 H0.5 Z" fill="#fff" stroke="#b4b4b4" stroke-width="0.9"/><path d="M9.5 0.5 V4.5 H13.5" fill="none" stroke="#b4b4b4" stroke-width="0.9"/><path d="M7.6 7.2 H12.2" stroke="#a4c8f0" stroke-width="1.2"/><path d="M7.6 9.6 H12.2" stroke="#5a96e0" stroke-width="1.2"/><rect x="-2" y="4" width="9" height="9" rx="0.8" fill="#1f5fc6"/><text x="2.5" y="11.6" font-family="Liberation Sans, sans-serif" font-size="8.6" font-weight="bold" fill="#fff" text-anchor="middle" textLength="6.8" lengthAdjust="spacingAndGlyphs">W</text></svg>
<svg style="left:262.3px;top:518.2px" width="5.6" height="5.2" viewBox="0 0 5.6 5.2"><rect width="5.6" height="5.2" fill="#fff"/><path d="M0 0 H5.6 V5.2 H0 Z" fill="none" stroke="#d8dde4" stroke-width="0.5"/><path d="M1.4 4.4 Q1.5 2.2 3.6 2.1" fill="none" stroke="#2a86e8" stroke-width="1.2" stroke-linecap="round"/><path d="M2.6 0.9 H4.6 V2.9 Z" fill="#2a86e8"/></svg>
<span class="t" id="t55" style="left:287.8px;top:508.8px;font-size:10.00px;line-height:13.00px;color:#111;transform:scaleX(0.9084);">Mental Health Update 2020</span><span class="t" id="t56" style="left:626.8px;top:508.8px;font-size:10.00px;line-height:13.00px;color:#6b6b6b;transform:scaleX(0.8923);">Brandon LeBlanc's OneDrive</span><svg style="left:264.8px;top:528.8px" width="14" height="17" viewBox="0 0 14 17"><path d="M0.5 0.5 H9.5 L13.5 4.5 V16.5 H0.5 Z" fill="#fff" stroke="#b4b4b4" stroke-width="0.9"/><path d="M9.5 0.5 V4.5 H13.5" fill="none" stroke="#b4b4b4" stroke-width="0.9"/><path d="M7.6 7.2 H12.2" stroke="#a4c8f0" stroke-width="1.2"/><path d="M7.6 9.6 H12.2" stroke="#5a96e0" stroke-width="1.2"/><rect x="-2" y="4" width="9" height="9" rx="0.8" fill="#1f5fc6"/><text x="2.5" y="11.6" font-family="Liberation Sans, sans-serif" font-size="8.6" font-weight="bold" fill="#fff" text-anchor="middle" textLength="6.8" lengthAdjust="spacingAndGlyphs">W</text></svg>
<svg style="left:262.3px;top:541.4px" width="5.6" height="5.2" viewBox="0 0 5.6 5.2"><rect width="5.6" height="5.2" fill="#fff"/><path d="M0 0 H5.6 V5.2 H0 Z" fill="none" stroke="#d8dde4" stroke-width="0.5"/><path d="M1.4 4.4 Q1.5 2.2 3.6 2.1" fill="none" stroke="#2a86e8" stroke-width="1.2" stroke-linecap="round"/><path d="M2.6 0.9 H4.6 V2.9 Z" fill="#2a86e8"/></svg>
<span class="t" id="t57" style="left:287.8px;top:532.0px;font-size:10.00px;line-height:13.00px;color:#111;transform:scaleX(0.8950);">Top 10 Superhero Movies</span><span class="t" id="t58" style="left:626.8px;top:532.0px;font-size:10.00px;line-height:13.00px;color:#6b6b6b;transform:scaleX(0.8923);">Brandon LeBlanc's OneDrive</span><svg style="left:264.8px;top:552.0px" width="14" height="17" viewBox="0 0 14 17"><path d="M0.5 0.5 H9.5 L13.5 4.5 V16.5 H0.5 Z" fill="#fff" stroke="#b4b4b4" stroke-width="0.9"/><path d="M9.5 0.5 V4.5 H13.5" fill="none" stroke="#b4b4b4" stroke-width="0.9"/><path d="M7.6 6.2 H9.6 M10.4 6.2 H12.4 M7.6 8.5 H9.6 M10.4 8.5 H12.4 M7.6 10.8 H9.6 M10.4 10.8 H12.4" stroke="#3a9a60" stroke-width="1.2"/><rect x="-2" y="4" width="9" height="9" rx="0.8" fill="#1e7a44"/><text x="2.5" y="11.6" font-family="Liberation Sans, sans-serif" font-size="8.6" font-weight="bold" fill="#fff" text-anchor="middle" textLength="6.8" lengthAdjust="spacingAndGlyphs">X</text></svg>
<svg style="left:262.3px;top:564.6px" width="5.6" height="5.2" viewBox="0 0 5.6 5.2"><rect width="5.6" height="5.2" fill="#fff"/><path d="M0 0 H5.6 V5.2 H0 Z" fill="none" stroke="#d8dde4" stroke-width="0.5"/><path d="M1.4 4.4 Q1.5 2.2 3.6 2.1" fill="none" stroke="#2a86e8" stroke-width="1.2" stroke-linecap="round"/><path d="M2.6 0.9 H4.6 V2.9 Z" fill="#2a86e8"/></svg>
<span class="t" id="t59" style="left:287.8px;top:555.2px;font-size:10.00px;line-height:13.00px;color:#111;transform:scaleX(0.8559);">Survey1</span><span class="t" id="t60" style="left:626.8px;top:555.2px;font-size:10.00px;line-height:13.00px;color:#6b6b6b;transform:scaleX(0.8923);">Brandon LeBlanc's OneDrive</span><svg style="left:264.8px;top:575.2px" width="14" height="17" viewBox="0 0 14 17"><path d="M0.5 0.5 H9.5 L13.5 4.5 V16.5 H0.5 Z" fill="#fff" stroke="#b4b4b4" stroke-width="0.9"/><path d="M9.5 0.5 V4.5 H13.5" fill="none" stroke="#b4b4b4" stroke-width="0.9"/><path d="M7.6 7.2 H12.2" stroke="#a4c8f0" stroke-width="1.2"/><path d="M7.6 9.6 H12.2" stroke="#5a96e0" stroke-width="1.2"/><rect x="-2" y="4" width="9" height="9" rx="0.8" fill="#1f5fc6"/><text x="2.5" y="11.6" font-family="Liberation Sans, sans-serif" font-size="8.6" font-weight="bold" fill="#fff" text-anchor="middle" textLength="6.8" lengthAdjust="spacingAndGlyphs">W</text></svg>
<svg style="left:262.3px;top:587.8px" width="5.6" height="5.2" viewBox="0 0 5.6 5.2"><rect width="5.6" height="5.2" fill="#fff"/><path d="M0 0 H5.6 V5.2 H0 Z" fill="none" stroke="#d8dde4" stroke-width="0.5"/><path d="M1.4 4.4 Q1.5 2.2 3.6 2.1" fill="none" stroke="#2a86e8" stroke-width="1.2" stroke-linecap="round"/><path d="M2.6 0.9 H4.6 V2.9 Z" fill="#2a86e8"/></svg>
<span class="t" id="t61" style="left:287.8px;top:578.4px;font-size:10.00px;line-height:13.00px;color:#111;transform:scaleX(0.9244);">Microsoft in 2019</span><span class="t" id="t62" style="left:491.0px;top:578.4px;font-size:10.00px;line-height:13.00px;color:#222;transform:scaleX(0.8921);">2/1/2020 10:09 PM</span><span class="t" id="t63" style="left:626.8px;top:578.4px;font-size:10.00px;line-height:13.00px;color:#6b6b6b;transform:scaleX(0.8923);">Brandon LeBlanc's OneDrive</span><svg style="left:264.8px;top:598.5px" width="14" height="17" viewBox="0 0 14 17"><path d="M0.5 0.5 H9.5 L13.5 4.5 V16.5 H0.5 Z" fill="#fff" stroke="#b4b4b4" stroke-width="0.9"/><path d="M9.5 0.5 V4.5 H13.5" fill="none" stroke="#b4b4b4" stroke-width="0.9"/><path d="M7.6 7.2 H12.2" stroke="#a4c8f0" stroke-width="1.2"/><path d="M7.6 9.6 H12.2" stroke="#5a96e0" stroke-width="1.2"/><rect x="-2" y="4" width="9" height="9" rx="0.8" fill="#1f5fc6"/><text x="2.5" y="11.6" font-family="Liberation Sans, sans-serif" font-size="8.6" font-weight="bold" fill="#fff" text-anchor="middle" textLength="6.8" lengthAdjust="spacingAndGlyphs">W</text></svg>
<svg style="left:262.3px;top:611.1px" width="5.6" height="5.2" viewBox="0 0 5.6 5.2"><rect width="5.6" height="5.2" fill="#fff"/><path d="M0 0 H5.6 V5.2 H0 Z" fill="none" stroke="#d8dde4" stroke-width="0.5"/><path d="M1.4 4.4 Q1.5 2.2 3.6 2.1" fill="none" stroke="#2a86e8" stroke-width="1.2" stroke-linecap="round"/><path d="M2.6 0.9 H4.6 V2.9 Z" fill="#2a86e8"/></svg>
<span class="t" id="t64" style="left:287.8px;top:601.7px;font-size:10.00px;line-height:13.00px;color:#111;transform:scaleX(0.9157);">Picard Timeline</span><span class="t" id="t65" style="left:491.0px;top:601.7px;font-size:10.00px;line-height:13.00px;color:#222;transform:scaleX(0.9101);">1/29/2020 11:45 AM</span><span class="t" id="t66" style="left:626.8px;top:601.7px;font-size:10.00px;line-height:13.00px;color:#6b6b6b;transform:scaleX(0.8923);">Brandon LeBlanc's OneDrive</span><div class="abs" style="left:262px;top:621px;width:20px;height:4px;overflow:hidden">
<svg style="left:2.8px;top:1.2px" width="14" height="17" viewBox="0 0 14 17"><path d="M0.5 0.5 H9.5 L13.5 4.5 V16.5 H0.5 Z" fill="#fff" stroke="#b4b4b4" stroke-width="0.9"/><path d="M9.5 0.5 V4.5 H13.5" fill="none" stroke="#b4b4b4" stroke-width="0.9"/></svg></div>
<span class="t" id="t67" style="left:61.8px;top:628.1px;font-size:10.00px;line-height:13.00px;color:#333;transform:scaleX(0.8995);">38 items</span><span class="t" id="t68" style="left:112.3px;top:628.1px;font-size:10.00px;line-height:13.00px;color:#333;transform:scaleX(0.9054);">1 item selected</span><div class="vsep" style="left:104px;top:628px;height:11px;background:#efefef"></div>
<div class="vsep" style="left:181px;top:628px;height:11px;background:#efefef"></div>
<svg style="left:941.0px;top:629.0px" width="10" height="8" viewBox="0 0 10 8"><path d="M0 0.6 H10 M0 2.9 H10 M0 5.2 H10 M0 7.5 H10" stroke="#222" stroke-width="0.9"/></svg>
<svg style="left:958.0px;top:628.4px" width="10" height="9" viewBox="0 0 10 9"><rect x="0.6" y="0.6" width="8.8" height="6.2" fill="none" stroke="#222" stroke-width="1"/><path d="M0.2 8.4 H9.8" stroke="#222" stroke-width="0.9"/></svg>
<div id="menu"></div>
<svg style="left:483.0px;top:485.0px" width="13.4" height="12.6" viewBox="0 0 13.4 12.6"><rect x="4" y="0" width="9.4" height="12.6" rx="1" fill="#2b7cd3"/><rect x="4" y="0" width="9.4" height="3.2" fill="#41a5ee"/><rect x="4" y="9.4" width="9.4" height="3.2" fill="#103f91"/><rect x="4" y="6.3" width="9.4" height="3.2" fill="#185abd"/><rect x="0" y="2.6" width="7.6" height="7.6" rx="0.8" fill="#185abd"/><text x="3.8" y="8.6" font-family="Liberation Sans, sans-serif" font-size="6" font-weight="bold" fill="#fff" text-anchor="middle">W</text></svg>
<svg style="left:483.0px;top:510.6px" width="13.4" height="11" viewBox="0 0 13.4 11"><path d="M0.6 9 V2 Q0.6 0.6 2 0.6 H4.6 L6.2 2.2 H9.8 Q11.2 2.2 11.2 3.6 V4.2 M0.6 9 L2.4 5.2 Q2.8 4.2 3.9 4.2 H11.8 Q13.2 4.2 12.7 5.5 L11.4 9.3 Q11 10.4 9.9 10.4 H2 Q0.6 10.4 0.6 9 Z" fill="none" stroke="#555" stroke-width="0.95" stroke-linejoin="round"/></svg>
<svg style="left:482.6px;top:534.5px" width="14" height="14" viewBox="0 0 14 14"><polygon points="7.00,1.00 8.76,4.57 12.71,5.15 9.85,7.93 10.53,11.85 7.00,10.00 3.47,11.85 4.15,7.93 1.29,5.15 5.24,4.57" fill="none" stroke="#2a8be0" stroke-width="1" stroke-linejoin="round"/></svg>
<svg style="left:482.6px;top:559.1px" width="14" height="14" viewBox="0 0 14 14"><polygon points="7.00,1.00 8.76,4.57 12.71,5.15 9.85,7.93 10.53,11.85 7.00,10.00 3.47,11.85 4.15,7.93 1.29,5.15 5.24,4.57" fill="none" stroke="#666" stroke-width="1" stroke-linejoin="round"/></svg>
<svg style="left:483.0px;top:559.0px" width="13" height="13" viewBox="0 0 13 13"><path d="M0.6 0.6 L12.4 12.4" stroke="#f9f9f9" stroke-width="2.6"/><path d="M0.6 0.6 L12.4 12.4" stroke="#2a8be0" stroke-width="1" stroke-linecap="round"/></svg>
<span class="t" id="t69" style="left:504.4px;top:484.1px;font-size:11.60px;line-height:15.08px;color:#1a1a1a;transform:scaleX(0.9093);">Open</span><span class="t" id="t70" style="left:504.4px;top:508.9px;font-size:11.60px;line-height:15.08px;color:#1a1a1a;transform:scaleX(0.9409);">Open file location</span><span class="t" id="t71" style="left:504.4px;top:533.7px;font-size:11.60px;line-height:15.08px;color:#1a1a1a;transform:scaleX(0.8928);">Pin to Quick access</span><span class="t" id="t72" style="left:504.4px;top:558.9px;font-size:11.60px;line-height:15.08px;color:#1a1a1a;transform:scaleX(0.8974);">Remove from Quick access</span><span class="t" id="t73" style="left:660.4px;top:486.5px;font-size:10.00px;line-height:13.00px;color:#5a5a5a;transform:scaleX(0.9203);">Enter</span>
</div>
</body></html>
